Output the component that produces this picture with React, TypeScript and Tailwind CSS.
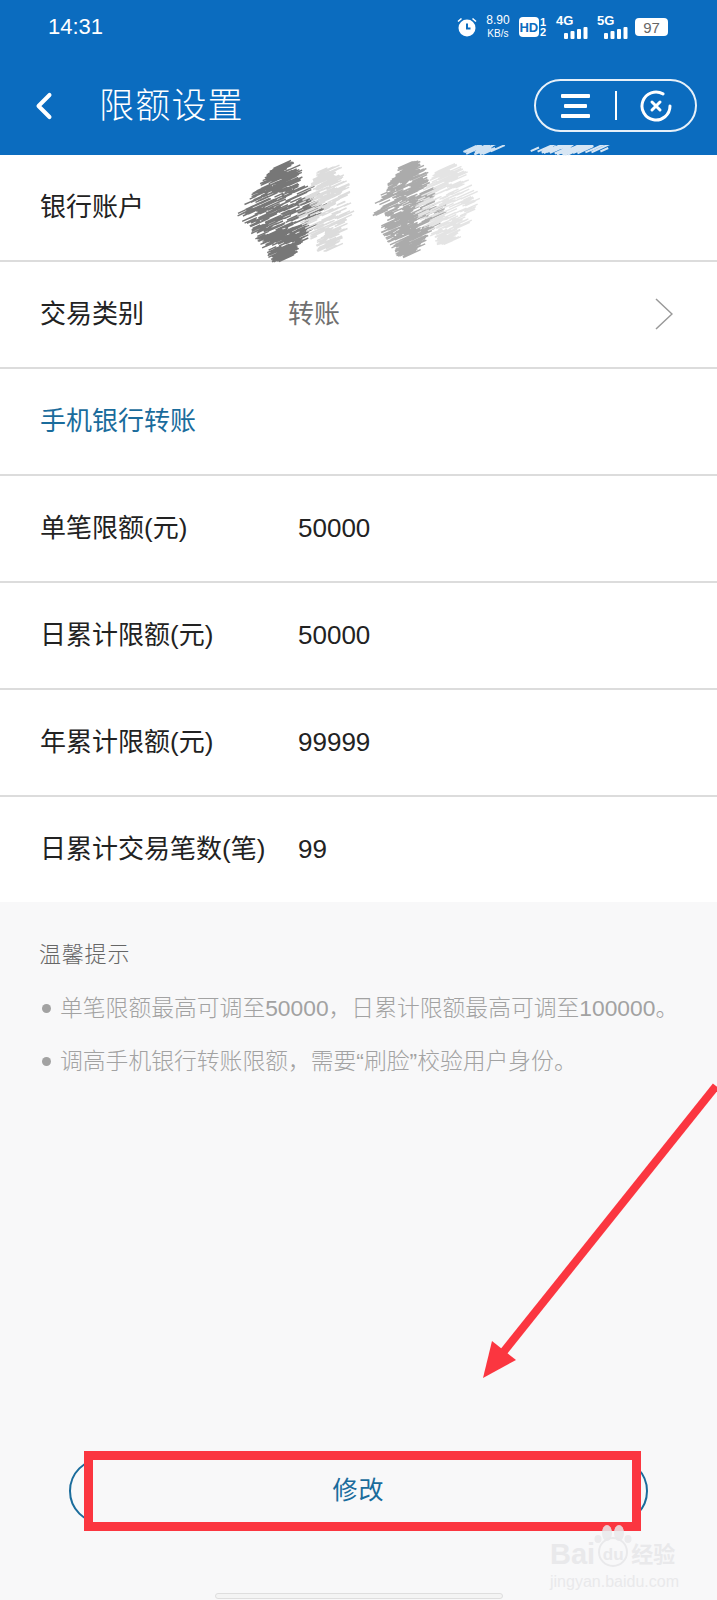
import { ChevronLeft } from "lucide-react";

const rows = [
  { label: "单笔限额(元)", value: "50000" },
  { label: "日累计限额(元)", value: "50000" },
  { label: "年累计限额(元)", value: "99999" },
  { label: "日累计交易笔数(笔)", value: "99" },
];

// deterministic hatch strokes for the scribbled-out account number
function hatch(x0: number, x1: number, y0: number, y1: number, count: number, seed: number) {
  const lines: string[] = [];
  let s = seed;
  const next = () => {
    s = (s * 9301 + 49297) % 233280;
    return s / 233280;
  };
  const cx = (x0 + x1) / 2;
  const cy = (y0 + y1) / 2;
  for (let i = 0; i < count; i++) {
    const y = y0 + next() * (y1 - y0);
    const spread = (1 - Math.abs(y - cy) / ((y1 - y0) / 2)) * ((x1 - x0) / 2) + 4;
    const x = cx + (next() - 0.5) * 2 * spread;
    const len = 6 + next() * 12;
    lines.push(`M${x.toFixed(1)} ${y.toFixed(1)}l${len.toFixed(1)} ${(-len * 0.45).toFixed(1)}`);
  }
  return lines.join("");
}

function Signal() {
  return (
    <svg width="24" height="12" viewBox="0 0 24 12" fill="#fff">
      <rect x="0" y="6" width="4" height="6" rx="1" />
      <rect x="6.5" y="4" width="4" height="8" rx="1" />
      <rect x="13" y="2" width="4" height="10" rx="1" />
      <rect x="19.5" y="0" width="4" height="12" rx="1" />
    </svg>
  );
}

function StatusBar() {
  return (
    <div className="flex h-[54px] items-center justify-between pl-[48px] pr-[49px] text-white">
      <span className="text-[22px] font-light leading-none">14:31</span>
      <div className="flex items-center">
        <svg width="20" height="20" viewBox="0 0 20 20" fill="#fff">
          <circle cx="10" cy="11" r="8.5" />
          <path d="M10 6.5V11.5H13.5" stroke="#0b6cbf" strokeWidth="2" fill="none" />
          <path d="M1 4.5L4.5 1.5M19 4.5L15.5 1.5" stroke="#fff" strokeWidth="1.6" />
        </svg>
        <div className="ml-[10px] flex w-[22px] flex-col items-center leading-[14px]">
          <span className="text-[12px]">8.90</span>
          <span className="text-[10px]">KB/s</span>
        </div>
        <span className="ml-[10px] flex h-[20px] w-[20px] items-center justify-center rounded-[4px] bg-white text-[13px] font-bold leading-none text-[#0b6cbf]">
          HD
        </span>
        <div className="flex flex-col items-center pl-[1px] text-[11px] font-bold leading-[10px]">
          <span>1</span>
          <span>2</span>
        </div>
        <div className="ml-[10px] flex w-[32px] flex-col">
          <span className="text-[13px] font-bold leading-[12px]">4G</span>
          <div className="flex justify-end">
            <Signal />
          </div>
        </div>
        <div className="ml-[9px] flex w-[31px] flex-col">
          <span className="text-[13px] font-bold leading-[12px]">5G</span>
          <div className="flex justify-end">
            <Signal />
          </div>
        </div>
        <div className="ml-[7px] flex h-[18px] w-[33px] items-center justify-center rounded-[4px] bg-white text-[15px] leading-none text-[#666]">
          97
        </div>
      </div>
    </div>
  );
}

function Capsule() {
  return (
    <div className="flex h-[53px] w-[163px] items-center rounded-full border-2 border-white/90">
      <div className="flex w-[79px] justify-end pr-[25px]">
        <svg width="29" height="24" viewBox="0 0 29 24" fill="#fff">
          <rect x="0" y="0" width="29" height="4" rx="1" />
          <rect x="3" y="10" width="23" height="4" rx="1" />
          <rect x="0" y="20" width="29" height="4" rx="1" />
        </svg>
      </div>
      <div className="h-[29px] w-[1.5px] bg-white" />
      <div className="flex flex-1 justify-center">
        <svg width="32" height="32" viewBox="0 0 32 32" fill="none" stroke="#fff" strokeLinecap="round">
          <path d="M23 3.9A14 14 0 1 0 30 16" strokeWidth="3" />
          <path d="M12 12L20 20M20 12L12 20" strokeWidth="3" />
        </svg>
      </div>
    </div>
  );
}

function Row({ children, last = false }: { children: React.ReactNode; last?: boolean }) {
  return (
    <div
      className={`flex items-center bg-white pb-[1px] pl-[40px] text-[26px] leading-none text-[#222] ${
        last ? "h-[105px]" : "h-[107px] border-b-2 border-[#dcdcdc]"
      }`}
    >
      {children}
    </div>
  );
}

export default function App() {
  return (
    <div
      className="relative flex h-[1600px] w-[717px] flex-col overflow-hidden bg-[#f8f8f9]"
      style={{ fontFamily: '"Liberation Sans", "Noto Sans CJK SC", sans-serif' }}
    >
      <header className="h-[155px] shrink-0 bg-[#0b6cbf]">
        <StatusBar />
        <div className="flex items-center justify-between pr-[20px] pt-[25px]">
          <div className="flex items-center">
            <ChevronLeft className="ml-[22px] size-[44px] text-white" strokeWidth={2.2} />
            <h1 className="ml-[33px] text-[35px] font-light leading-none tracking-[1.2px] text-white">限额设置</h1>
          </div>
          <Capsule />
        </div>
      </header>

      <Row>
        <span>银行账户</span>
      </Row>
      <Row>
        <span className="w-[248px]">交易类别</span>
        <span className="text-[#707070]">转账</span>
        <svg className="ml-auto mr-[44px]" width="18" height="32" viewBox="0 0 18 32" fill="none" stroke="#999" strokeWidth="1.5">
          <path d="M1 1L17 16L1 31" />
        </svg>
      </Row>
      <Row>
        <span className="text-[#1a6c9c]">手机银行转账</span>
      </Row>
      {rows.map((row, i) => (
        <Row key={row.label} last={i === rows.length - 1}>
          <span className="w-[258px] whitespace-nowrap">{row.label}</span>
          <span>{row.value}</span>
        </Row>
      ))}

      <section className="flex flex-1 flex-col px-[39px] pt-[42px]">
        <h2 className="text-[22px] font-light leading-none tracking-[0.8px] text-[#666]">温馨提示</h2>
        <ul className="mt-[31px] flex flex-col gap-[30px] text-[22.8px] font-light leading-[23px] text-[#a2a2a2]">
          <li className="flex items-center whitespace-nowrap">
            <span className="ml-[3px] mr-[9px] size-[9px] shrink-0 rounded-full bg-[#a2a2a2]" />
            单笔限额最高可调至50000，日累计限额最高可调至100000。
          </li>
          <li className="flex items-center whitespace-nowrap">
            <span className="ml-[3px] mr-[9px] size-[9px] shrink-0 rounded-full bg-[#a2a2a2]" />
            调高手机银行转账限额，需要“刷脸”校验用户身份。
          </li>
        </ul>
        <button className="mx-[30px] mb-[76px] mt-auto flex h-[66px] items-center justify-center rounded-full border-2 border-[#1a6c9c] pb-[1px] text-[25px] leading-none tracking-[1px] text-[#1a6c9c]">
          <span className="relative z-10">修改</span>
        </button>
      </section>

      {/* bottom handle */}
      <div className="absolute bottom-[1px] left-[215px] h-[6px] w-[288px] rounded-full border border-[#dedede] bg-[#f4f4f4]" />

      {/* scribble over the account number */}
      <svg className="absolute left-0 top-[145px]" width="717" height="120" viewBox="0 145 717 120" fill="none">
        <path d={hatch(240, 312, 168, 262, 520, 7)} stroke="#777" strokeWidth="1.4" />
        <path d={hatch(298, 344, 172, 252, 220, 11)} stroke="#dcdcdc" strokeWidth="1.4" />
        <path d={hatch(372, 432, 168, 258, 420, 23)} stroke="#ababab" strokeWidth="1.4" />
        <path d={hatch(415, 466, 170, 245, 220, 31)} stroke="#e4e4e4" strokeWidth="1.4" />
        <path d={hatch(458, 490, 149, 155, 22, 41)} stroke="#cfe2f3" strokeWidth="2" />
        <path d={hatch(530, 600, 148, 155, 50, 43)} stroke="#d7e6f4" strokeWidth="2" />
      </svg>

      {/* annotation arrow */}
      <svg className="absolute left-[470px] top-[1075px]" width="247" height="315" viewBox="470 1075 247 315">
        <path d="M716 1086L501 1355" stroke="#fb3640" strokeWidth="8" fill="none" />
        <polygon points="483,1378 492,1341 516,1360" fill="#fb3640" />
      </svg>

      {/* annotation box, its fill hides the button's outline */}
      <div className="absolute left-[84px] top-[1451px] h-[80px] w-[557px] border-[9px] border-[#fb3640] bg-[#f8f8f9]" />

      {/* watermark */}
      <div className="absolute left-[550px] top-[1525px] flex w-[130px] flex-col items-start text-[#e9e9eb]">
        <svg className="ml-[44px]" width="38" height="18" viewBox="0 0 38 18" fill="#e9e9eb" opacity="0.85">
          <ellipse cx="13" cy="8" rx="5" ry="8" />
          <ellipse cx="25" cy="8" rx="5" ry="8" />
          <ellipse cx="4" cy="14" rx="3.5" ry="4" />
          <ellipse cx="34" cy="14" rx="3.5" ry="4" />
        </svg>
        <div className="-mt-[8px] flex items-center text-[29px] font-bold leading-none">
          <span className="pt-[5px]">Bai</span>
          <span className="ml-[3px] flex size-[30px] items-center justify-center rounded-full border-2 border-[#e9e9eb] pt-[4px] text-[17px]">du</span>
          <span className="ml-[3px] pt-[5px] text-[22px]">经验</span>
        </div>
        <span className="mt-[5px] text-[16px] leading-none">jingyan.baidu.com</span>
      </div>
    </div>
  );
}
